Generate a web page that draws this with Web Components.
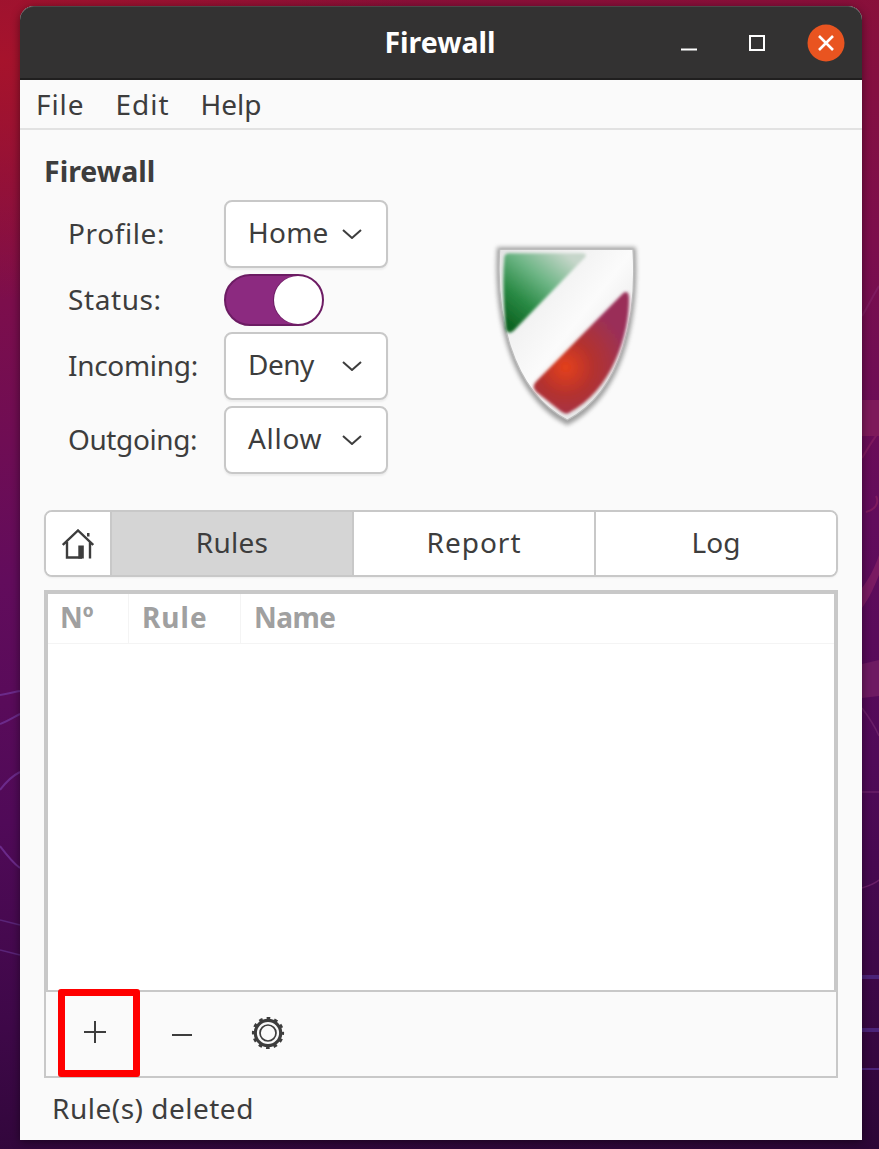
<!DOCTYPE html>
<html lang="en">
<head>
<meta charset="UTF-8">
<title>Firewall</title>
<style>
  html, body { margin: 0; height: 100%; }
  body {
    width: 879px; height: 1149px; overflow: hidden; box-sizing: border-box;
    padding: 6px 17px 9px 20px; position: relative;
    font-family: "Noto Sans", "Open Sans", sans-serif;
    color: #3d3d3d;
    background:
      radial-gradient(420px 240px at 0 60px, #a6132c 0%, rgba(166,19,44,0) 100%),
      linear-gradient(176deg, #8c1036 0%, #7c0e4c 25%, #620c5c 48%, #500a58 68%, #3e0848 85%, #2c0636 100%);
  }
  body > svg { position: absolute; left: 0; top: 0; }
  fw-window { position: relative; }
</style>
</head>
<body>

<!-- faint wallpaper swirls behind the window -->
<svg width="879" height="1149" fill="none">
  <path d="M0 695C8 694 14 692 20 691M0 724C8 721 14 717 20 714M0 790C6 782 12 776 20 772M0 846C6 854 12 862 20 868" stroke="#6b2a8a" stroke-width="2"/>
  <path d="M0 920L20 925M0 950L20 955" stroke="#5a2478" stroke-width="1.500"/>
  <path d="M862 316C868 306 874 294 879 286M862 458C868 448 874 438 879 432M866 512C874 510 880 504 876 496" stroke="#7e1a5e" stroke-width="2"/>
  <path d="M862 400H879V436H862Z" fill="#7e1a5a"/>
  <path d="M862 588C868 580 874 570 879 555V575C874 588 868 600 862 608Z" fill="#7a1a62"/>
  <path d="M862 664L879 660V696L862 698Z" fill="#6e1a62"/>
  <path d="M862 708C868 716 874 724 879 736M862 792H879M862 888C868 886 874 884 879 880" stroke="#6a1f68" stroke-width="1.500"/>
  <path d="M862 977H879M862 1030H879" stroke="#4b2378" stroke-width="4"/>
  <path d="M862 1069H879" stroke="#4b2378" stroke-width="2"/>
</svg>

<fw-window>
  <fw-titlebar slot="top">Firewall</fw-titlebar>
  <fw-menubar slot="top">
    <span style="letter-spacing:.9px">File</span><span style="letter-spacing:1px">Edit</span><span>Help</span>
  </fw-menubar>

  <fw-panel>
    <fw-form>
      <fw-label style="letter-spacing:.6px">Profile:</fw-label><fw-combo style="letter-spacing:.25px">Home</fw-combo>
      <fw-label style="letter-spacing:.6px">Status:</fw-label><fw-switch></fw-switch>
      <fw-label style="letter-spacing:-.3px">Incoming:</fw-label><fw-combo style="letter-spacing:-.5px">Deny</fw-combo>
      <fw-label style="letter-spacing:-.4px">Outgoing:</fw-label><fw-combo style="letter-spacing:.7px">Allow</fw-combo>
    </fw-form>
    <fw-shield></fw-shield>
  </fw-panel>

  <fw-tabs>
    <fw-tab home></fw-tab>
    <fw-tab active style="letter-spacing:.3px">Rules</fw-tab>
    <fw-tab style="letter-spacing:1px">Report</fw-tab>
    <fw-tab>Log</fw-tab>
  </fw-tabs>

  <fw-rules></fw-rules>
  <fw-toolbar></fw-toolbar>
  <fw-status style="letter-spacing:.5px">Rule(s) deleted</fw-status>
</fw-window>

<template id="window-tpl">
  <style>
    :host {
      display: flex; flex-direction: column; height: 100%;
      background: #fafafa; border-radius: 14px 14px 0 0;
      box-shadow: 0 2px 10px rgba(0,0,0,.45);
    }
    main { flex: 1; display: flex; flex-direction: column; padding: 0 24px; min-height: 0; }
  </style>
  <slot name="top"></slot>
  <main><slot></slot></main>
</template>

<template id="titlebar-tpl">
  <style>
    :host {
      display: block; height: 74px; box-sizing: border-box; position: relative;
      background: #333232; color: #fff; border-radius: 14px 14px 0 0;
      border-top: 1px solid #4a4949; border-bottom: 2px solid #201f1f;
    }
    .title {
      height: 71px; display: flex; align-items: center; justify-content: center;
      font-size: 28.500px; font-weight: 700; padding: 0 2px 1px 0; box-sizing: border-box;
    }
    .btns { position: absolute; top: 0; right: 0; height: 71px; display: flex; align-items: center; }
    .btn { width: 16px; height: 16px; display: block; }
    .min { margin-right: 52px; }
    .max { margin-right: 42px; }
    .close { margin-right: 17px; width: 38px; height: 38px; }
  </style>
  <div class="title"><slot></slot></div>
  <div class="btns">
    <svg class="btn min" viewBox="0 0 16 16"><path d="M0 14.5h16" stroke="#fff" stroke-width="2"/></svg>
    <svg class="btn max" viewBox="0 0 16 16"><rect x="1" y="1" width="14" height="14" fill="none" stroke="#fff" stroke-width="2"/></svg>
    <svg class="close" viewBox="0 0 38 38"><circle cx="19" cy="19" r="18.5" fill="#e95420"/><path d="M12 12l14 14M26 12L12 26" stroke="#fff" stroke-width="2.600" fill="none"/></svg>
  </div>
</template>

<template id="menubar-tpl">
  <style>
    :host {
      display: flex; gap: 31px; height: 50px; box-sizing: border-box; align-items: center;
      padding: 0 0 0 16px; font-size: 28px;
      border-bottom: 2px solid #e2e2e2; background: #fafafa;
    }
  </style>
  <slot></slot>
</template>

<template id="panel-tpl">
  <style>
    :host { display: flex; flex-direction: column; padding-top: 21px; }
    h2 { margin: 0; font-size: 28.500px; font-weight: 700; line-height: 40px; height: 49px; color: #3d3d3d; }
    .row { display: flex; }
    ::slotted(fw-shield) { margin: 34px 0 0 91px; }
  </style>
  <h2>Firewall</h2>
  <div class="row"><slot></slot></div>
</template>

<template id="form-tpl">
  <style>
    :host {
      display: grid; grid-template-columns: 156px 164px; padding-left: 24px;
      align-items: center; row-gap: 6px; font-size: 28px;
    }
  </style>
  <slot></slot>
</template>

<template id="label-tpl">
  <style>
    :host { display: block; padding-bottom: 2px; }
  </style>
  <slot></slot>
</template>

<template id="combo-tpl">
  <style>
    :host {
      display: flex; align-items: center; justify-content: space-between; box-sizing: border-box;
      height: 68px; padding: 0 24px 4px 22px; font-size: 28px; background: #fff;
      border: 2px solid #c8c8c8; border-radius: 8px; box-shadow: 0 2px 2px rgba(0,0,0,.06);
    }
    svg { width: 20px; height: 10px; display: block; margin-top: 4px; }
  </style>
  <slot></slot>
  <svg viewBox="0 0 20 10"><path d="M1 1l9 8 9-8" fill="none" stroke="#3d3d3d" stroke-width="2"/></svg>
</template>

<template id="switch-tpl">
  <style>
    :host {
      display: block; width: 100px; height: 52px; box-sizing: border-box; position: relative;
      background: #8c2a80; border: 2px solid #6c1c63; border-radius: 26px;
    }
    i {
      position: absolute; right: 0; top: 0; width: 48px; height: 48px; box-sizing: border-box;
      background: #fff; border-radius: 50%; box-shadow: -1px 0 0 #6c1c63;
    }
  </style>
  <i></i>
</template>

<template id="shield-tpl">
  <style>
    :host { display: block; width: 170px; height: 200px; }
    svg { display: block; }
  </style>
  <svg width="170" height="200" viewBox="0 0 510 600">
    <defs>
      <linearGradient id="g" gradientUnits="userSpaceOnUse" x1="90" y1="270" x2="260" y2="60">
        <stop offset="0" stop-color="#0e6422"/><stop offset=".3" stop-color="#2a8a45"/><stop offset=".62" stop-color="#6db585"/><stop offset="1" stop-color="#c6d6ca"/>
      </linearGradient>
      <radialGradient id="r" gradientUnits="userSpaceOnUse" cx="260" cy="400" r="190">
        <stop offset="0" stop-color="#e4401c"/><stop offset=".45" stop-color="#b3312f"/><stop offset="1" stop-color="#9a2f58"/>
      </radialGradient>
      <linearGradient id="w" x1="0" y1="0" x2="1" y2="1">
        <stop offset="0" stop-color="#e4e4e4"/><stop offset=".5" stop-color="#fbfbfb"/><stop offset="1" stop-color="#d6d6d6"/>
      </linearGradient>
      <filter id="b" x="-10%" y="-10%" width="120%" height="120%"><feGaussianBlur stdDeviation="4"/></filter>
      <filter id="s" x="-10%" y="-10%" width="120%" height="120%"><feGaussianBlur stdDeviation="6"/></filter>
      <filter id="e" x="-5%" y="-5%" width="110%" height="110%"><feGaussianBlur stdDeviation="1.500"/></filter>
    </defs>
    <path d="M54 40H470C482 230 446 482 265 574C84 482 42 230 54 40Z" fill="#7a7a7a" opacity=".7" filter="url(#s)"/>
    <path d="M62 46H462C474 230 438 468 265 558C92 468 50 230 62 46Z" fill="url(#w)" stroke="#bdbdbd" stroke-width="4" filter="url(#e)"/>
    <path d="M90 58H310Q328 60 316 72L104 290Q88 304 80 286C74 210 70 140 76 70Q78 58 90 58Z" fill="url(#g)" filter="url(#b)"/>
    <path d="M432 178Q448 166 450 190C452 300 400 470 268 538Q258 542 245 532L172 474Q156 458 172 442Z" fill="url(#r)" filter="url(#b)"/>
  </svg>
</template>

<template id="tabs-tpl">
  <style>
    :host {
      display: grid; grid-template-columns: 66px 242px 242px 1fr; box-sizing: border-box; height: 67px;
      margin-top: 36px; border: 2px solid #c8c8c8; border-radius: 8px; overflow: hidden; background: #fff;
      box-shadow: 0 1px 2px rgba(0,0,0,.05);
    }
  </style>
  <slot></slot>
</template>

<template id="tab-tpl">
  <style>
    :host {
      display: flex; align-items: center; justify-content: center; font-size: 28px;
      background: #fff; border-right: 2px solid #c8c8c8; padding-bottom: 3px;
    }
    :host(:last-child) { border-right: 0; }
    :host([active]) { background: #d5d5d5; }
    svg { width: 32px; height: 30px; display: block; margin-top: 3px; }
  </style>
  <slot></slot>
</template>

<template id="rules-tpl">
  <style>
    :host {
      display: flex; flex-direction: column; height: 402px; box-sizing: border-box; margin-top: 13px;
      background: #fff; border: solid #c8c8c8; border-width: 4px 4px 2px 4px; flex: none;
    }
    .head { display: grid; grid-template-columns: 81px 112px 1fr; height: 49px; border-bottom: 1px solid #f4f4f4; }
    .head span {
      display: flex; align-items: center; padding: 0 0 3px 13px; font-size: 28px; font-weight: 700; color: #a0a0a0;
      border-right: 1px solid #f4f4f4;
    }
    .head span:first-child { padding-left: 12px; }
    .head span:nth-child(2) { letter-spacing: 1px; }
    .head span:last-child { border-right: 0; letter-spacing: -.5px; }
  </style>
  <div class="head"><span>Nº</span><span>Rule</span><span>Name</span></div>
</template>

<template id="toolbar-tpl">
  <style>
    :host {
      display: flex; align-items: center; position: relative; height: 86px; box-sizing: border-box; flex: none;
      border: solid #c8c8c8; border-width: 0 2px 2px 2px; padding-left: 6px;
    }
    .b { width: 86.5px; height: 84px; display: flex; align-items: center; justify-content: center; flex: none; }
    .plus { margin-bottom: 4px; }
    .gear { margin-bottom: 2px; }
    svg { display: block; }
    .mark {
      position: absolute; left: 12px; top: -3px; width: 82px; height: 88px; box-sizing: border-box;
      border: 7px solid #f00; border-radius: 3px;
    }
  </style>
  <div class="b"><svg class="plus" width="22" height="22" viewBox="0 0 22 22"><path d="M11 0v22M0 11h22" stroke="#3d3d3d" stroke-width="2"/></svg></div>
  <div class="b"><svg width="22" height="24" viewBox="0 0 22 24"><path d="M1 13h20" stroke="#3d3d3d" stroke-width="2"/></svg></div>
  <div class="b">
    <svg class="gear" width="34" height="34" viewBox="0 0 34 34">
      <circle cx="17" cy="17" r="12.700" fill="none" stroke="#3d3d3d" stroke-width="3.200"/>
      <circle cx="17" cy="17" r="8" fill="none" stroke="#3d3d3d" stroke-width="1.700"/>
      <circle cx="17" cy="17" r="14.500" fill="none" stroke="#3d3d3d" stroke-width="3.200" stroke-dasharray="3.600 3.993" stroke-dashoffset="1.800"/>
    </svg>
  </div>
  <div class="mark"></div>
</template>

<template id="status-tpl">
  <style>
    :host { display: flex; align-items: center; flex: 1; font-size: 28px; padding: 0 0 2px 8px; }
  </style>
  <slot></slot>
</template>

<script>
  // every element just clones its template into an open shadow root
  class Base extends HTMLElement {
    connectedCallback() {
      if (this.shadowRoot) return;
      this.attachShadow({ mode: 'open' });
      this.shadowRoot.append(document.getElementById(this.constructor.tpl).content.cloneNode(true));
      this.ready();
    }
    ready() {}
  }
  const simple = (name, tpl) => customElements.define(name, class extends Base { static tpl = tpl; });

  simple('fw-window', 'window-tpl');
  simple('fw-titlebar', 'titlebar-tpl');
  simple('fw-menubar', 'menubar-tpl');
  simple('fw-panel', 'panel-tpl');
  simple('fw-form', 'form-tpl');
  simple('fw-label', 'label-tpl');
  simple('fw-combo', 'combo-tpl');
  simple('fw-switch', 'switch-tpl');
  simple('fw-shield', 'shield-tpl');
  simple('fw-tabs', 'tabs-tpl');
  simple('fw-rules', 'rules-tpl');
  simple('fw-toolbar', 'toolbar-tpl');
  simple('fw-status', 'status-tpl');

  customElements.define('fw-tab', class extends Base {
    static tpl = 'tab-tpl';
    ready() {
      if (this.hasAttribute('home')) {
        this.shadowRoot.querySelector('slot').insertAdjacentHTML('beforebegin',
          `<svg viewBox="0 0 32 30"><path d="M5 13V28.500H20M28 13V29.500M.8 16L16 1.500L31.200 16" fill="none" stroke="#3d3d3d" stroke-width="2.400"/><rect x="16.300" y="16.500" width="5.500" height="13" fill="#3d3d3d"/><rect x="25" y="4" width="2.500" height="3.500" fill="#3d3d3d"/></svg>`);
      }
    }
  });
</script>
</body>
</html>
